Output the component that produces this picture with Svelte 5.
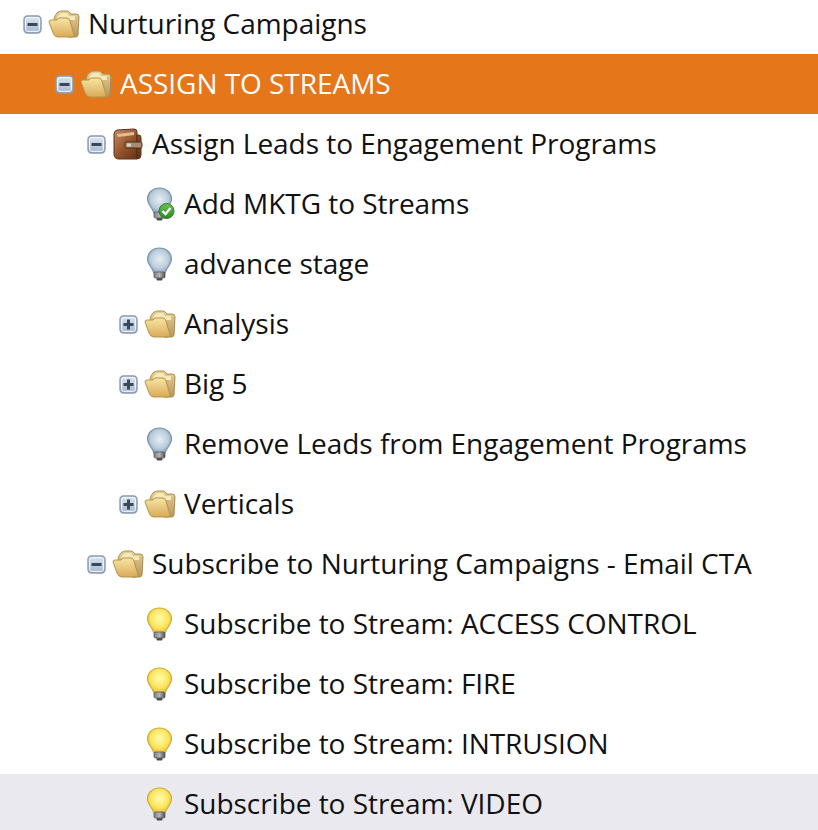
<script>
const rows = [
 {t:'Nurturing Campaigns',d:0,tog:'m',i:'folder'},
 {t:'ASSIGN TO STREAMS',d:1,tog:'m',i:'folder',sel:true},
 {t:'Assign Leads to Engagement Programs',d:2,tog:'m',i:'prog'},
 {t:'Add MKTG to Streams',d:3,i:'gray',check:true},
 {t:'advance stage',d:3,i:'gray'},
 {t:'Analysis',d:3,tog:'p',i:'folder'},
 {t:'Big 5',d:3,tog:'p',i:'folder'},
 {t:'Remove Leads from Engagement Programs',d:3,i:'gray'},
 {t:'Verticals',d:3,tog:'p',i:'folder'},
 {t:'Subscribe to Nurturing Campaigns - Email CTA',d:2,tog:'m',i:'folder'},
 {t:'Subscribe to Stream: ACCESS CONTROL',d:3,i:'yellow'},
 {t:'Subscribe to Stream: FIRE',d:3,i:'yellow'},
 {t:'Subscribe to Stream: INTRUSION',d:3,i:'yellow'},
 {t:'Subscribe to Stream: VIDEO',d:3,i:'yellow',hover:true},
];
</script>

<svg class="defs" width="0" height="0" aria-hidden="true">
 <defs>
  <linearGradient id="tg" x1="0" y1="0" x2="0" y2="1">
    <stop offset="0" stop-color="#dfe6ef"/><stop offset="1" stop-color="#a3b7d2"/>
  </linearGradient>
  <linearGradient id="fb" x1="0" y1="0" x2="0" y2="1">
    <stop offset="0" stop-color="#e9d193"/><stop offset="1" stop-color="#b8955a"/>
  </linearGradient>
  <linearGradient id="ff" x1="0" y1="0" x2="0" y2="1">
    <stop offset="0" stop-color="#f7e5a2"/><stop offset="1" stop-color="#d9aa58"/>
  </linearGradient>
  <linearGradient id="wl" x1="0" y1="0" x2="1" y2="1">
    <stop offset="0" stop-color="#c99063"/><stop offset=".55" stop-color="#8f4f29"/><stop offset="1" stop-color="#5a2f17"/>
  </linearGradient>
  <radialGradient id="gray" cx="50%" cy="45%" r="60%">
    <stop offset="0" stop-color="#e6edf4"/><stop offset=".6" stop-color="#bccedd"/><stop offset="1" stop-color="#8199b2"/>
  </radialGradient>
  <radialGradient id="yellow" cx="50%" cy="42%" r="62%">
    <stop offset="0" stop-color="#fffbb0"/><stop offset=".6" stop-color="#fbe65f"/><stop offset="1" stop-color="#e3b42c"/>
  </radialGradient>
  <linearGradient id="base" x1="0" y1="0" x2="1" y2="0">
    <stop offset="0" stop-color="#7d7f80"/><stop offset=".5" stop-color="#b4b6b7"/><stop offset="1" stop-color="#4e5052"/>
  </linearGradient>
  <linearGradient id="chk" x1="0" y1="0" x2="0" y2="1">
    <stop offset="0" stop-color="#6cc04e"/><stop offset="1" stop-color="#2d8a2c"/>
  </linearGradient>
 </defs>
</svg>

<div class="tree">
 {#each rows as r}
  <div class="row d{r.d}" class:sel={r.sel} class:hover={r.hover}>
   <span class="tog">
    {#if r.tog}
    <svg width="19" height="19" viewBox="0 0 19 19">
      <rect x="1" y="1" width="17" height="17" rx="3.5" fill="url(#tg)" stroke="#8b9bb0" stroke-width="1.4"/>
      <rect x="2.6" y="2.6" width="13.8" height="13.8" rx="2.2" fill="none" stroke="#f4f7fa" stroke-width="1"/>
      <rect x="4.5" y="8" width="10" height="3" fill="#3c4757"/>
      {#if r.tog==='p'}<rect x="8" y="4.5" width="3" height="10" fill="#3c4757"/>{/if}
    </svg>
    {/if}
   </span>
   <span class="ic">
    {#if r.i==='folder'}
    <svg width="32" height="28" viewBox="0 0 32 28">
      <path d="M6 9 C7 4 10 1 14 1 H19 Q21 1 22 3 L23 4 H28 Q31 4 31 7 L30 25 Q30 27 27 27 H20Z" fill="url(#fb)" stroke="#a58d58"/>
      <path d="M9 8 C10 5 12 3 15 3 H19 L21 6 H27 L27 10 H14Z" fill="#f6e8b8"/>
      <path d="M1 12 Q1 10 3 10 H9 L11 8 H19 Q21 8 22 11 L26 25 Q26.5 27 24 27 H10 Q7 27 5.5 24Z" fill="url(#ff)" stroke="#b3934f"/>
    </svg>
    {:else if r.i==='prog'}
    <svg width="32" height="32" viewBox="0 0 32 32">
      <path d="M2 6 Q2 3 5 2 L22 1 Q25 1 25 4 V7 H27 Q29 7 29 10 V27 Q29 31 25 31 H7 Q2 31 2 26Z" fill="url(#wl)" stroke="#5a3218"/>
      <path d="M5 6 L22 4 V7 L6 9Z" fill="#e3bc96"/>
      <path d="M25 7 V31" stroke="#4d2a14" stroke-width="1.2" fill="none"/>
      <rect x="13" y="14" width="17" height="6" rx="1.5" fill="#a98a72" stroke="#4d2a14"/>
      <rect x="15" y="15.5" width="4" height="3" fill="#dcd3c8"/>
    </svg>
    {:else}
    <svg width="32" height="34" viewBox="0 0 32 34">
      <path d="M15.5 1 C8.5 1 3.5 6 3.5 12 C3.5 17 8 20 10 26 H21 C23 20 27.5 17 27.5 12 C27.5 6 22.5 1 15.5 1Z" fill={`url(#${r.i})`} stroke={r.i==='yellow'?'#d4ad36':'#7d94ab'} stroke-width="1.2"/>
      <rect x="10" y="25" width="11" height="6" rx="1.5" fill="url(#base)" stroke="#55575a" stroke-width=".8"/>
      <rect x="12.5" y="31" width="6" height="2.4" rx="1" fill="#4c4f52"/>
      {#if r.check}
       <circle cx="22.5" cy="24" r="7.5" fill="url(#chk)" stroke="#2a7a2a"/>
       <path d="M18.5 24 L21.5 27 L26.5 21" fill="none" stroke="#fff" stroke-width="2.2"/>
      {/if}
    </svg>
    {/if}
   </span>
   <span class="lbl">{r.t}</span>
  </div>
 {/each}
</div>

<style>
:global(body){margin:0;background:#fff}
.defs{position:absolute}
.tree{width:818px;height:836px;overflow:hidden;margin-top:-6px;font-family:"Open Sans",sans-serif;font-size:28px;letter-spacing:-.04px;color:#111}
.row{height:60px;display:flex;align-items:center}
.d0{padding-left:23px}.d1{padding-left:55px}.d2{padding-left:87px}.d3{padding-left:119px}
.tog{width:19px;height:19px;flex:none;margin-right:6px}
.tog svg{display:block}
.ic{width:32px;height:34px;flex:none;margin-right:8px;display:flex;align-items:center;justify-content:center}
.ic svg{display:block;flex:none;filter:blur(.4px)}
.lbl{white-space:nowrap;margin-top:-2px}
.sel{background:#e6761a;color:#fff}
.hover{background:#e9e9ef}
</style>
